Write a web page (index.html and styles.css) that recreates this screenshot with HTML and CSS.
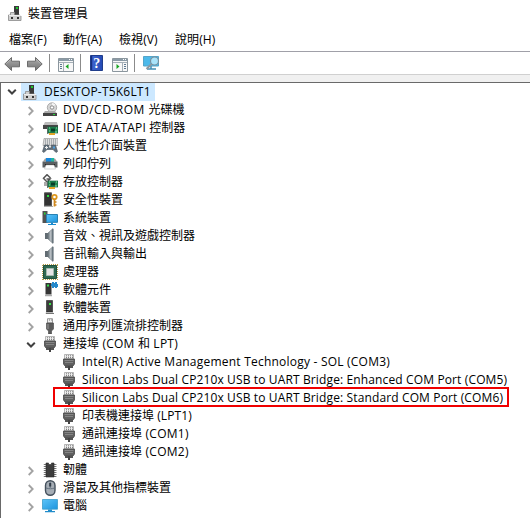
FILE: index.html
```
<!DOCTYPE html>
<html lang="zh-Hant">
<head>
<meta charset="utf-8">
<title>裝置管理員</title>
<link rel="stylesheet" href="styles.css">
</head>
<body>
<svg class="defs" aria-hidden="true">
  <linearGradient id="gray" x1="0" y1="0" x2="0" y2="1"><stop offset="0" stop-color="#b0b0b0"/><stop offset="1" stop-color="#707070"/></linearGradient>
  <linearGradient id="screen" x1="0" y1="0" x2="1" y2="1"><stop offset="0" stop-color="#5cc4f8"/><stop offset="1" stop-color="#1c94de"/></linearGradient>
  <linearGradient id="metal"><stop offset="0" stop-color="#67727a"/><stop offset=".5" stop-color="#b5bcc1"/><stop offset="1" stop-color="#7b858c"/></linearGradient>
  <linearGradient id="help"><stop offset="0" stop-color="#1d3f9c"/><stop offset=".25" stop-color="#3c62cc"/><stop offset="1" stop-color="#2349b4"/></linearGradient>
  <symbol id="right" viewBox="0 0 8 10"><path d="M1.7 1 5.7 5l-4 4" fill="none" stroke="#a2a2a2" stroke-width="1.8"/></symbol>
  <symbol id="down" viewBox="0 0 10 8"><path d="m1.2 1.8 3.8 3.7 3.8-3.7" fill="none" stroke="#404040" stroke-width="2"/></symbol>
  <symbol id="device" viewBox="0 0 16 16"><path d="M7 1h5v9H7z" fill="#3b3b3b"/><path d="M9 2h2v2H9z" fill="#20c830"/><path d="M3.5 7.5h4V10h5l1.5 1v4.5H1.5V10h2z" fill="#d0d0d0" stroke="#8a8a8a" stroke-width=".8"/><path d="M2 10.5h12" stroke="#eee"/><path d="M4 12h2v2H4zm6 0h2v2h-2z" fill="#333"/></symbol>
  <symbol id="disc" viewBox="0 0 16 16"><circle cx="10" cy="5.5" r="4.7" fill="#d5d5d5" stroke="#929292" stroke-width=".7"/><path d="m10 5.5 3.6-3A4.5 4.5 0 0 0 10 1z" fill="#f5f5f5"/><circle cx="10" cy="5.5" r="1.7" fill="#fff" stroke="#898989"/><path d="m3 9-2 2.5h14L13 9z" fill="#aaa"/><path d="M1 11h14v3H1z" fill="#444"/><path d="M11 12h2v1h-2z" fill="#24d537"/></symbol>
  <symbol id="card" viewBox="0 0 16 16"><path d="M5 7h1v7H5z" fill="#777"/><path d="M6 7h10v6H6z" fill="#258b54" stroke="#12633c" stroke-width=".7"/><path d="M9 8.5h4v3H9z" fill="#083d27"/><path d="M7 8h1m6 0h1m-8 3h1m5 1h2" stroke="#8be1a7"/><path d="M7 14h6" stroke="#e3a628" stroke-width="2"/></symbol>
  <symbol id="ide" viewBox="0 0 16 16"><path d="M3 2h12l1 4H1z" fill="#bcbcbc"/><path d="M1 5h15v4H1z" fill="#464646"/><use href="#card"/></symbol>
  <symbol id="hid" viewBox="0 0 16 16"><path d="M2 .5h14v7H1z" fill="#ddd" stroke="#999" stroke-width=".7"/><path d="M3 2h12M3 4h12M3 6h12" stroke="#737c82" stroke-dasharray="1 1"/><path d="M2.5 7h4l.5 3h2l.5-3h4l2 6.5-1.5 1-3-3H5l-3 3-1.5-1z" fill="#63717d" stroke="#46515b" stroke-width=".6"/><path d="M3 9.5h3M4.5 8v3" stroke="#eee"/><path d="M11 8.5h2v2h-2z" fill="#4ea0dd"/></symbol>
  <symbol id="printer" viewBox="0 0 16 16"><path d="M3 2.5h10l2 3H1z" fill="#9d9d9d"/><path d="M4 2h8v4H4z" fill="#1687dd"/><path d="M9 2h3v4H9z" fill="#20b5a1"/><path d="M.5 5.5h15v6H.5z" fill="#5b5f61"/><path d="M3 8h10v2H3z" fill="#222"/><path d="M4 9h8l1.5 4h-11z" fill="#fff" stroke="#b8b8b8" stroke-width=".6"/></symbol>
  <symbol id="storage" viewBox="0 0 16 16"><path d="M8.5 4 5 .7 1.5 4.3 5 8l3-3H4.5" fill="none" stroke="#555" stroke-width="1.5"/><path d="M2 8h6v4H2z" fill="#aaa"/><use href="#card"/></symbol>
  <symbol id="tower" viewBox="0 0 16 16"><path d="M4.5.5h6V12h-6z" fill="#3c3c3c" stroke="#222" stroke-width=".6"/><path d="M7 3h2v2H7z" fill="#37e748"/><path d="M4 12h7l.5 2h-8z" fill="#bbb"/><path d="M4 13.5h8" stroke="#777"/></symbol>
  <symbol id="security" viewBox="0 0 16 16"><path d="M2.5.8h7v13h-7z" fill="#333" stroke="#555"/><path d="M5 3h2v2H5z" fill="#2bdb3d"/><path d="M2 14.5h9" stroke="#aaa"/><circle cx="12.5" cy="5" r="2.2" fill="#fff" stroke="#dc971d" stroke-width="1.8"/><path d="M12.5 7.5v7M13 10h1.5M13 13h1.5" stroke="#cf881e" stroke-width="1.7"/></symbol>
  <symbol id="system" viewBox="0 0 16 16"><path d="M.5 1h5v12h-5z" fill="#525252"/><path d="M2 2.5h1.5v2H2z" fill="#25d636"/><path d="M4.5 4.5h11v7.8h-11z" fill="url(#screen)" stroke="#2981b2"/><path d="M9 12.5h2V14h3v1H6v-1h3z" fill="#168bd1"/></symbol>
  <symbol id="speaker" viewBox="0 0 16 16"><path d="M3 5h3v6H3z" fill="#626c73"/><path d="m6 5 5-4.5v15L6 11z" fill="url(#metal)" stroke="#737c82" stroke-width=".6"/><path d="M10.8 1v14" stroke="#66737c" stroke-width="1.3"/></symbol>
  <symbol id="cpu" viewBox="0 0 16 16"><path d="M1 .5h15M.5 1v15M1 15.5h15M15.5 1v15" stroke="#b59a43" stroke-dasharray="1 1"/><path d="M1.5 1.5h13v13h-13z" fill="#2e6850" stroke="#1f513e"/><path d="M4.5 4.5h7v7h-7z" fill="#e5e5e5" stroke="#a6b9af"/></symbol>
  <symbol id="component" viewBox="0 0 16 16"><path d="M3.5 1h6v11.5h-6z" fill="#353535"/><path d="M5 2.5h2v2H5z" fill="#35e04a"/><path d="M3 13.5h7" stroke="#aaa" stroke-width="1.5"/><path d="M10 0h2v1h1V0h2v2h1v3h-1v1h-2V5h-1v1h-2V4H9V2h1z" fill="#2588cb"/></symbol>
  <symbol id="usb" viewBox="0 0 16 16"><path d="M5.5.7h5V5h-5z" fill="#eee" stroke="#999"/><path d="M7 2h.8m1.2 0h.7" stroke="#555"/><path d="M4.5 5h7v6l-2 2v3h-3v-3l-2-2z" fill="#5c5c5c" stroke="#434343" stroke-width=".6"/><path d="M6 6v5" stroke="#999"/></symbol>
  <symbol id="port" viewBox="0 0 16 16"><path d="M3.5.5h9V5h-9z" fill="#eee" stroke="#a4a4a4" stroke-width=".8"/><path d="M5 1.8h7M5 3.6h7" stroke="#777" stroke-dasharray="1 1"/><path d="M2.5 5h11v5l-1.5 2H4l-1.5-2z" fill="#606060" stroke="#484848" stroke-width=".8"/><path d="M3.5 6.5h9M4 8.5h8" stroke="#858585"/><path d="M4 11h8v3H4z" fill="#555"/><path d="M7 12h2v4H7z" fill="#444"/></symbol>
  <symbol id="firmware" viewBox="0 0 16 16"><path d="M3 2v13M13.2 2v13" stroke="#777" stroke-width="2.5" stroke-dasharray="1 1"/><path d="M4 1h2.5v1.5h3V1H12v14H4z" fill="#3d3d3d" stroke="#292929" stroke-width=".6"/></symbol>
  <symbol id="mouse" viewBox="0 0 16 16"><rect x="3.5" y=".7" width="9.5" height="14.6" rx="4.7" fill="#a5adb5" stroke="#44505c" stroke-width="1.4"/><path d="M4 8c3 1 6 1 8.5 0M8.2 1.5V8" fill="none" stroke="#64717f"/><path d="M8.2 3v3.5" stroke="#2e3a47" stroke-width="2"/></symbol>
  <symbol id="computer" viewBox="0 0 16 16"><path d="M.5 1.5h15v9.7H.5z" fill="url(#screen)" stroke="#3b9dca" stroke-width=".8"/><path d="M6 11.5h4V13h3v1.2H3V13h3z" fill="#218cca"/></symbol>
  <symbol id="arrow" viewBox="0 0 16 16"><path d="M.8 8 7.5 1.5v3.7h8v5.6h-8v3.7z" fill="url(#gray)" stroke="#6b6b6b" stroke-width="1"/><path d="M2.3 7.7 6.7 3.5" fill="none" stroke="#c5c5c5" stroke-width=".6"/></symbol>
</svg>
<header class="title"><svg class="ico"><use href="#device"/></svg><h1>裝置管理員</h1></header>
<nav class="menu"><span>檔案(F)</span><span>動作(A)</span><span>檢視(V)</span><span>說明(H)</span></nav>
<div class="toolbar">
  <svg class="arrow"><use href="#arrow"/></svg><svg class="arrow forward"><use href="#arrow"/></svg><i></i>
  <svg class="tool panel" viewBox="0 0 16 14"><path d="M.5.5h15v13H.5z" fill="#f7f7f7" stroke="#8b969e"/><path d="M1 1h14v2H1z" fill="#8a9aa6"/><path d="M11 1.5h1m1 0h1" stroke="#fff"/><path d="M1 4.5h14M5.5 5v8" stroke="#a5afb7"/><path d="M2 6.5h2m-2 2h2m-2 2h2" stroke="#5e7991"/><path d="M10.5 6v5L7.5 8.5z" fill="#18a522"/></svg><i class="second"></i>
  <svg class="tool help" viewBox="0 0 14 16"><path d="M.5.5h12v15H.5z" fill="url(#help)" stroke="#203d8b"/><path d="M1.5 1v14" stroke="#162f7f"/><text x="3.3" y="13.4">?</text></svg>
  <svg class="tool panel" viewBox="0 0 16 14"><path d="M.5.5h15v13H.5z" fill="#f7f7f7" stroke="#8b969e"/><path d="M1 1h14v2H1z" fill="#8a9aa6"/><path d="M11 1.5h1m1 0h1" stroke="#fff"/><path d="M1 4.5h14M10.5 5v8" stroke="#a5afb7"/><path d="M12 6.5h2m-2 2h2m-2 2h2" stroke="#5e7991"/><path d="M4.5 6v5l3-2.5z" fill="#18a522"/></svg><i class="third"></i>
  <svg class="tool scan" viewBox="0 0 17 16"><path d="M.5 1.5h15v9.5H.5z" fill="#4cb9ea" stroke="#54a5ca"/><path d="M4 14h9M8 11v3" stroke="#438eb5" stroke-width="1.5"/><path d="m8.5 9-5 5" stroke="#8e989f" stroke-width="2"/><circle cx="11.5" cy="6" r="4" fill="#a9e3fa" stroke="#78909e" stroke-width="1.2"/></svg>
</div>
<main class="tree">
  <div class="row root"><svg class="chev open"><use href="#down"/></svg><div class="selected"><svg class="ico"><use href="#device"/></svg><span class="host">DESKTOP-T5K6LT1</span></div></div>
  <div class="row"><svg class="chev"><use href="#right"/></svg><svg class="ico"><use href="#disc"/></svg><span><span class="dvd">DVD/CD-ROM </span>光碟機</span></div>
  <div class="row"><svg class="chev"><use href="#right"/></svg><svg class="ico"><use href="#ide"/></svg><span><span class="ata">IDE ATA/ATAPI </span>控制器</span></div>
  <div class="row"><svg class="chev"><use href="#right"/></svg><svg class="ico"><use href="#hid"/></svg><span>人性化介面裝置</span></div>
  <div class="row"><svg class="chev"><use href="#right"/></svg><svg class="ico"><use href="#printer"/></svg><span>列印佇列</span></div>
  <div class="row"><svg class="chev"><use href="#right"/></svg><svg class="ico"><use href="#storage"/></svg><span>存放控制器</span></div>
  <div class="row"><svg class="chev"><use href="#right"/></svg><svg class="ico"><use href="#security"/></svg><span>安全性裝置</span></div>
  <div class="row"><svg class="chev"><use href="#right"/></svg><svg class="ico"><use href="#system"/></svg><span>系統裝置</span></div>
  <div class="row"><svg class="chev"><use href="#right"/></svg><svg class="ico"><use href="#speaker"/></svg><span>音效、視訊及遊戲控制器</span></div>
  <div class="row"><svg class="chev"><use href="#right"/></svg><svg class="ico"><use href="#speaker"/></svg><span>音訊輸入與輸出</span></div>
  <div class="row"><svg class="chev"><use href="#right"/></svg><svg class="ico"><use href="#cpu"/></svg><span>處理器</span></div>
  <div class="row"><svg class="chev"><use href="#right"/></svg><svg class="ico"><use href="#component"/></svg><span>軟體元件</span></div>
  <div class="row"><svg class="chev"><use href="#right"/></svg><svg class="ico"><use href="#tower"/></svg><span>軟體裝置</span></div>
  <div class="row"><svg class="chev"><use href="#right"/></svg><svg class="ico"><use href="#usb"/></svg><span>通用序列匯流排控制器</span></div>
  <div class="row"><svg class="chev open"><use href="#down"/></svg><svg class="ico"><use href="#port"/></svg><span>連接埠<span class="ports"> (COM </span>和<span class="ports"> LPT)</span></span></div>
  <div class="row child"><svg class="ico"><use href="#port"/></svg><span class="intel">Intel(R) Active Management Technology - SOL (COM3)</span></div>
  <div class="row child"><svg class="ico"><use href="#port"/></svg><span class="bridge">Silicon Labs Dual CP210x USB to UART Bridge: Enhanced COM Port (COM5)</span></div>
  <div class="row child marked"><svg class="ico"><use href="#port"/></svg><span class="bridge">Silicon Labs Dual CP210x USB to UART Bridge: Standard COM Port (COM6)</span></div>
  <div class="row child"><svg class="ico"><use href="#port"/></svg><span>印表機連接埠<span class="lpt"> (LPT1)</span></span></div>
  <div class="row child"><svg class="ico"><use href="#port"/></svg><span>通訊連接埠<span class="com"> (COM1)</span></span></div>
  <div class="row child"><svg class="ico"><use href="#port"/></svg><span>通訊連接埠<span class="com"> (COM2)</span></span></div>
  <div class="row"><svg class="chev"><use href="#right"/></svg><svg class="ico"><use href="#firmware"/></svg><span>韌體</span></div>
  <div class="row"><svg class="chev"><use href="#right"/></svg><svg class="ico"><use href="#mouse"/></svg><span>滑鼠及其他指標裝置</span></div>
  <div class="row"><svg class="chev"><use href="#right"/></svg><svg class="ico"><use href="#computer"/></svg><span>電腦</span></div>
</main>
</body>
</html>
```
FILE: styles.css
```
*, *::after { box-sizing: border-box; }
html, body { width: 530px; height: 518px; overflow: hidden; }
body { margin: 0; background: #fff; color: #000; font: 12px/18px "Open Sans", "Noto Sans CJK TC", sans-serif; display: flex; flex-direction: column; }
svg { display: block; flex: none; }
.defs { position: absolute; width: 0; height: 0; }
.title { height: 28px; display: flex; align-items: center; padding-left: 7px; flex: none; }
.title .ico { margin-top: -2px; }
h1 { margin: 0 0 0 5px; font-size: 12px; font-weight: 400; }
.ico { width: 16px; height: 16px; }
.menu { height: 23px; display: flex; align-items: center; padding-left: 9px; flex: none; }
.menu span { width: 54px; letter-spacing: .1px; white-space: nowrap; }
.menu span:nth-child(2), .menu span:nth-child(3) { width: 56px; }
.toolbar { height: 24px; border-top: 1px solid #a0a0a8; border-bottom: 1px solid #d0d0d0; box-shadow: 0 7px 0 #f0f0f0; display: flex; align-items: center; padding-left: 4px; flex: none; }
.arrow { width: 16px; height: 16px; margin: 2px 7px 0 0; }
.forward { transform: scaleX(-1); margin-right: 6px; }
.toolbar i { width: 1px; height: 18px; background: #8b8b8b; margin-right: 8px; flex: none; }
.panel { width: 16px; height: 14px; margin: 3px 6px 0 0; }
.toolbar .second { margin-right: 9px; }
.help { width: 14px; height: 16px; margin-right: 8px; }
.help text { fill: #fff; font: 700 14px "Liberation Serif", serif; }
.toolbar .third { margin-right: 8px; }
.scan { width: 17px; height: 16px; }
.tree { margin-top: 7px; flex: 1; border-top: 1px solid #696969; border-left: 1px solid #696969; }
.row { height: 18px; display: flex; align-items: center; padding-left: 26px; white-space: nowrap; }
.chev { width: 8px; height: 10px; margin: 2px 7px 0 0; }
.chev.open { width: 10px; height: 8px; margin: 1px 6px 0 -1px; }
.row > .ico { margin-right: 5px; }
.root { padding-left: 6px; }
.root .chev.open { margin: 0 4px 0 0; }
.selected { display: flex; height: 18px; align-items: center; width: 134px; background: #cce8ff; padding-left: 1px; }
.selected span { margin-left: 6px; }
.child { padding-left: 60px; }
.host { letter-spacing: .2px; }
.dvd { letter-spacing: .52px; }
.ata { letter-spacing: .2px; }
.ports { letter-spacing: .25px; }
.intel { letter-spacing: .22px; }
.bridge { letter-spacing: .13px; }
.lpt { letter-spacing: .1px; }
.com { letter-spacing: .3px; }
.marked { margin-left: 53px; padding-left: 7px; position: relative; }
.marked::after { content: ""; position: absolute; left: -1px; top: -2px; width: 456px; height: 20px; border: 2px solid #f00000; }
```
